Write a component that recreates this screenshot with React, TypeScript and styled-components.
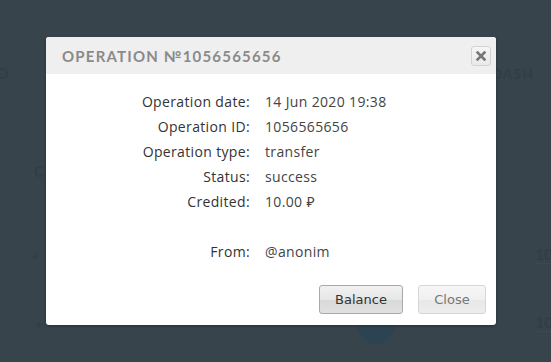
import React from 'react';
import styled, { createGlobalStyle } from 'styled-components';

const GlobalStyle = createGlobalStyle`
  html, body { margin: 0; padding: 0; }
  body {
    background: #37444c;
    font-family: "Open Sans", "Noto Sans", sans-serif;
  }
`;

const Page = styled.div`
  position: relative;
  width: 551px;
  height: 362px;
  overflow: hidden;
  background: #37444c;
`;

const Backdrop = styled.div`
  display: flex;
  flex-direction: column;
  padding-top: 62px;
  margin: 0 -6px 0 -3px;
  color: #313e46;
  font-family: "Lato", sans-serif;
  font-weight: 700;
`;

const GhostRow = styled.div<{ h: number; bottom?: boolean }>`
  height: ${p => p.h}px;
  display: flex;
  justify-content: space-between;
  align-items: ${p => (p.bottom ? 'flex-end' : 'center')};
`;

const Ghost = styled.span<{ size?: number; inset?: number }>`
  font-size: ${p => p.size ?? 15}px;
  letter-spacing: 1px;
  white-space: nowrap;
  margin-left: ${p => p.inset ?? 0}px;
`;

const GhostDash = styled.span`
  font-size: 14px;
  letter-spacing: 1px;
  margin-right: 23px;
`;

const GhostNum = styled.span`
  font-size: 15px;
  border-bottom: 1px dotted #3f4d55;
  padding-right: 4px;
`;

const GhostCircle = styled.div`
  position: absolute;
  left: 358px;
  top: 308px;
  width: 36px;
  height: 36px;
  border-radius: 50%;
  background: #2c4452;
`;

const Modal = styled.div`
  position: absolute;
  left: 46px;
  top: 37px;
  width: 450px;
  height: 288px;
  background: #fff;
  border-radius: 3px;
  box-shadow: 0 1px 3px rgba(0, 0, 0, 0.3);
  display: flex;
  flex-direction: column;
  overflow: hidden;
`;

const Header = styled.div`
  height: 37px;
  background: #efefef;
  display: flex;
  align-items: center;
  justify-content: space-between;
  padding: 0 5px 0 16px;
`;

const Title = styled.h2`
  margin: 0;
  font-family: "Lato", sans-serif;
  font-weight: 700;
  font-size: 15px;
  letter-spacing: 1.2px;
  color: #8a8a8a;
  text-transform: uppercase;
`;

const CloseX = styled.button`
  width: 20px;
  height: 20px;
  padding: 0;
  border: 1px solid #d3d3d3;
  border-radius: 3px;
  background: linear-gradient(#f6f6f6, #e9e9e9);
  display: flex;
  align-items: center;
  justify-content: center;
`;

const Body = styled.div`
  flex: 1;
  display: grid;
  grid-template-columns: 204px 1fr;
  grid-auto-rows: 25px;
  column-gap: 15px;
  margin-top: 15px;
  font-size: 14px;
  letter-spacing: 0.35px;
  color: #333;
`;

const Label = styled.div`
  text-align: right;
  line-height: 25px;
`;

const Value = styled.div`
  line-height: 25px;
  color: #444;
`;

const Spacer = styled.div`
  grid-column: 1 / 3;
`;

const Footer = styled.div`
  display: flex;
  justify-content: flex-end;
  gap: 15px;
  padding: 0 10px 11px 0;
`;

const Button = styled.button<{ muted?: boolean }>`
  height: 29px;
  padding: 0 14px;
  font-family: "DejaVu Sans", Verdana, sans-serif;
  font-size: 13px;
  color: ${p => (p.muted ? '#777' : '#333')};
  border: 1px solid ${p => (p.muted ? '#d6d6d6' : '#a9a9a9')};
  border-radius: 3px;
  background: ${p =>
    p.muted
      ? 'linear-gradient(#f6f6f6 0%, #f0f0f0 50%, #e8e8e8 51%, #ededed 100%)'
      : 'linear-gradient(#f1f1f1 0%, #e6e6e6 50%, #d9d9d9 51%, #e1e1e1 100%)'};
  min-width: ${p => (p.muted ? '68px' : '84px')};
`;

const rows: [string, string][] = [
  ['Operation date:', '14 Jun 2020 19:38'],
  ['Operation ID:', '1056565656'],
  ['Operation type:', 'transfer'],
  ['Status:', 'success'],
  ['Credited:', '10.00 ₽'],
];

export default function App() {
  return (
    <Page>
      <GlobalStyle />
      <Backdrop>
        <GhostRow h={22}>
          <Ghost>D</Ghost>
          <GhostDash>DASH</GhostDash>
        </GhostRow>
        <GhostRow h={96} bottom>
          <Ghost inset={37}>C</Ghost>
        </GhostRow>
        <GhostRow h={84} bottom>
          <Ghost size={14} inset={34}>+</Ghost>
          <GhostNum>10</GhostNum>
        </GhostRow>
        <GhostRow h={68} bottom>
          <Ghost size={14} inset={38}>+</Ghost>
          <GhostNum>10</GhostNum>
        </GhostRow>
      </Backdrop>
      <GhostCircle />
      <Modal>
        <Header>
          <Title>Operation №1056565656</Title>
          <CloseX aria-label="close">
            <svg width="10" height="10" viewBox="0 0 10 10">
              <path d="M1.5 1.5 L8.5 8.5 M8.5 1.5 L1.5 8.5" stroke="#777" strokeWidth="2.6" strokeLinecap="square" />
            </svg>
          </CloseX>
        </Header>
        <Body>
          {rows.map(([l, v]) => (
            <React.Fragment key={l}>
              <Label>{l}</Label>
              <Value>{v}</Value>
            </React.Fragment>
          ))}
          <Spacer />
          <Label>From:</Label>
          <Value>@anonim</Value>
        </Body>
        <Footer>
          <Button>Balance</Button>
          <Button muted>Close</Button>
        </Footer>
      </Modal>
    </Page>
  );
}
